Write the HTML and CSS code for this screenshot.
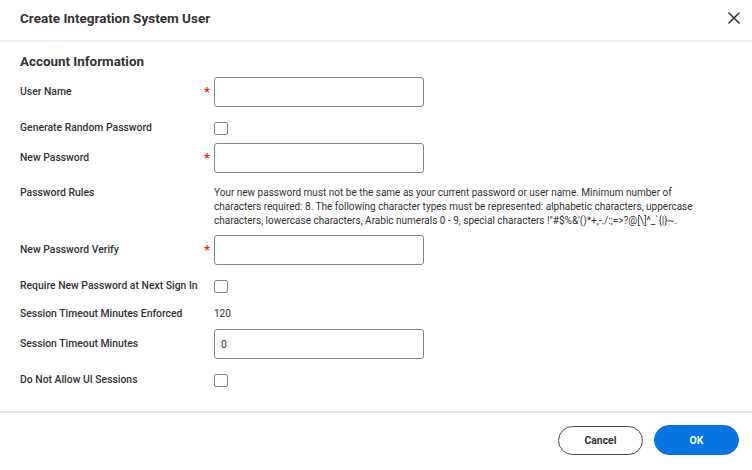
FILE: index.html
```html
<!DOCTYPE html>
<html>
<head>
<meta charset="utf-8">
<link rel="stylesheet" href="styles.css">
</head>
<body>
<div class="dialog">
  <header class="header">
    <h1 class="title">Create Integration System User</h1>
    <button class="close" aria-label="Close">
      <svg width="12" height="12" viewBox="0 0 12 12"><path d="M1 1L11 11M11 1L1 11" stroke="#333" stroke-width="1.6" stroke-linecap="round"/></svg>
    </button>
  </header>
  <main class="body">
    <h2 class="section">Account Information</h2>
    <div class="form">
      <div class="row row-input">
        <div class="label">User Name</div>
        <div class="req">*</div>
        <input class="input" type="text">
      </div>
      <div class="row row-check">
        <div class="label">Generate Random Password</div>
        <div class="req"></div>
        <span class="check"></span>
      </div>
      <div class="row row-input">
        <div class="label">New Password</div>
        <div class="req">*</div>
        <input class="input" type="password">
      </div>
      <div class="row row-text row-rules">
        <div class="label">Password Rules</div>
        <div class="req"></div>
        <div class="value rules">Your new password must not be the same as your current password or user name. Minimum number of characters required: 8. The following character types must be represented: alphabetic characters, uppercase characters, lowercase characters, Arabic numerals 0 - 9, special characters !"#$%&amp;'()*+,-./:;=&gt;?@[\]^_`{|}~.</div>
      </div>
      <div class="row row-input">
        <div class="label">New Password Verify</div>
        <div class="req">*</div>
        <input class="input" type="password">
      </div>
      <div class="row row-check">
        <div class="label">Require New Password at Next Sign In</div>
        <div class="req"></div>
        <span class="check"></span>
      </div>
      <div class="row row-text">
        <div class="label">Session Timeout Minutes Enforced</div>
        <div class="req"></div>
        <div class="value">120</div>
      </div>
      <div class="row row-input">
        <div class="label">Session Timeout Minutes</div>
        <div class="req"></div>
        <input class="input" type="text" value="0">
      </div>
      <div class="row row-check">
        <div class="label">Do Not Allow UI Sessions</div>
        <div class="req"></div>
        <span class="check"></span>
      </div>
    </div>
  </main>
  <footer class="footer">
    <button class="btn btn-secondary">Cancel</button>
    <button class="btn btn-primary">OK</button>
  </footer>
</div>
</body>
</html>
```
FILE: styles.css
```css
* { box-sizing: border-box; }
html, body { margin: 0; padding: 0; background: #fff; }
body {
  font-family: Roboto, "Liberation Sans", Arial, sans-serif;
  color: #333;
}
.dialog {
  display: flex;
  flex-direction: column;
  height: 470px;
}
.header {
  height: 42px;
  border-bottom: 2px solid #f0f1f2;
  display: flex;
  align-items: center;
  justify-content: space-between;
  padding: 0 8px 4px 20px;
}
.title {
  margin: 0;
  font-size: 13.5px;
  font-weight: 700;
  color: #333;
}
.close {
  border: 0;
  background: none;
  padding: 0;
  width: 12px;
  height: 12px;
  display: flex;
  position: relative;
  left: -4px;
}
.body {
  padding: 0 20px;
}
.section {
  margin: 11px 0 0;
  font-size: 13.4px;
  font-weight: 700;
  line-height: 18px;
  color: #333;
}
.form {
  display: flex;
  flex-direction: column;
  gap: 8px;
  margin-top: 6px;
}
.row {
  display: grid;
  grid-template-columns: 183px 11px 1fr;
  align-items: center;
}
.row-check { padding-top: 6px; }
.row-text { padding-top: 6px; align-items: start; }
.row-rules { padding-top: 5px; margin-bottom: -1px; }
.label {
  font-size: 10.4px;
  font-weight: 500;
  color: #333;
  line-height: 14px;
  white-space: nowrap;
}
.req {
  color: #de2e21;
  font-size: 13px;
  line-height: 14px;
  font-weight: 700;
  padding-left: 1px;
  align-self: center;
}
.row-text .req { align-self: start; }
.input {
  width: 210px;
  height: 30px;
  border: 1px solid #7b858f;
  border-radius: 3px;
  font-family: inherit;
  font-size: 10.4px;
  color: #333;
  padding: 0 6px;
  background: #fff;
  outline: none;
}
.check {
  display: block;
  width: 14px;
  height: 13px;
  border: 1px solid #7b858f;
  border-radius: 2px;
  background: #fff;
}
.value {
  font-size: 10px;
  line-height: 14px;
  color: #333;
}
.rules { max-width: 496px; }
.footer {
  margin-top: auto;
  border-top: 2px solid #e6e6e6;
  height: 59px;
  display: flex;
  justify-content: flex-end;
  align-items: flex-start;
  gap: 11px;
  padding: 13px 13px 0 0;
}
.btn {
  width: 85px;
  height: 29px;
  border-radius: 15px;
  font-family: inherit;
  font-size: 10.4px;
  font-weight: 700;
}
.btn-secondary {
  background: #fff;
  border: 1px solid #4a4a4a;
  color: #333;
}
.btn-primary {
  background: #0875e1;
  border: 1px solid #0875e1;
  color: #fff;
  height: 30px;
  margin-top: -1px;
}
```
